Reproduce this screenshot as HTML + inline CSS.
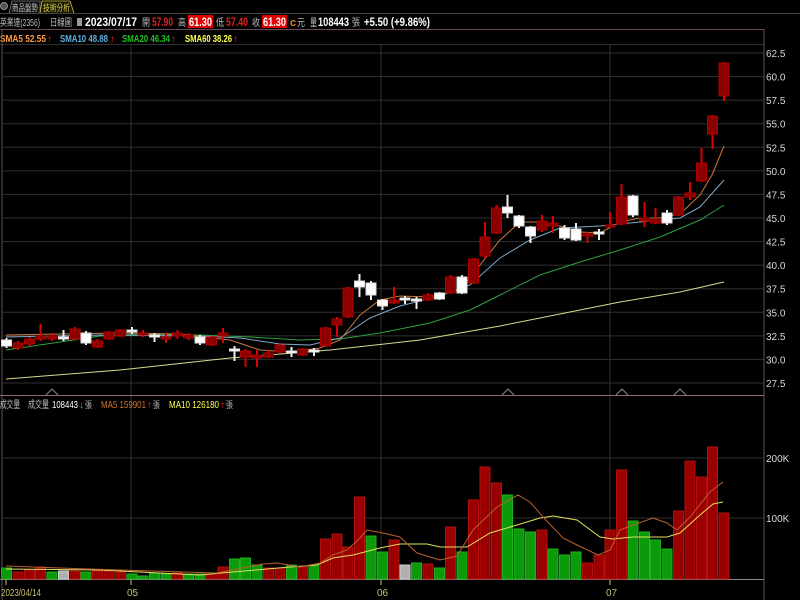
<!DOCTYPE html>
<html><head><meta charset="utf-8"><style>
html,body{margin:0;padding:0;background:#000;width:800px;height:600px;overflow:hidden}
svg{display:block}
text{font-family:"Liberation Sans","Noto Sans CJK TC",sans-serif}
.ax{fill:#d8d8d8;font-size:10px}
.g{stroke:#303030;stroke-width:1}
.rw{stroke:#e00000;stroke-width:2}
.rb{fill:#8c0000;stroke:#b00000;stroke-width:1}
.ww{stroke:#f0f0f0;stroke-width:2}
.wb{fill:#fff;stroke:#ddd;stroke-width:1}
.vr{fill:#9a0000;stroke:#b41010}
.vg{fill:#0a9a0a;stroke:#20b020}
.vx{fill:#b0b0b0;stroke:#ccc}
</style></head><body>
<svg width="800" height="600" viewBox="0 0 800 600" xmlns="http://www.w3.org/2000/svg">
<rect width="800" height="600" fill="#000"/>
<!-- tabs -->
<circle cx="4" cy="6" r="3.5" fill="#555" stroke="#aaa" stroke-width="0.8"/>
<path d="M9 13 L12 1 L40 1 L40 13" fill="#111" stroke="#777" stroke-width="0.8"/>
<text x="12" y="11" font-size="9" fill="#bbb" textLength="26" lengthAdjust="spacingAndGlyphs">商品盤勢</text>
<path d="M40 13 L42 1 L70 1 L74 13" fill="#1a1a00" stroke="#c8c040" stroke-width="0.8"/>
<text x="43" y="11" font-size="9" fill="#e0d060" textLength="27" lengthAdjust="spacingAndGlyphs">技術分析</text>
<line x1="0" y1="13.5" x2="800" y2="13.5" stroke="#444"/>
<!-- info row -->
<g font-size="10" lengthAdjust="spacingAndGlyphs">
<text x="0" y="26" fill="#bbb" textLength="40" lengthAdjust="spacingAndGlyphs">英業達(2356)</text>
<text x="50" y="26" fill="#bbb" textLength="22" lengthAdjust="spacingAndGlyphs">日線圖</text>
<rect x="77" y="18" width="5" height="8" fill="#999"/>
<text x="85" y="26" font-size="11.5" font-weight="bold" fill="#fff" textLength="52" lengthAdjust="spacingAndGlyphs">2023/07/17</text>
<text x="142" y="26" fill="#bbb" textLength="8" lengthAdjust="spacingAndGlyphs">開</text>
<text x="152" y="26" font-size="11.5" font-weight="bold" fill="#e02020" textLength="21" lengthAdjust="spacingAndGlyphs">57.90</text>
<text x="178" y="26" fill="#bbb" textLength="8" lengthAdjust="spacingAndGlyphs">高</text>
<rect x="188" y="15" width="25" height="13" fill="#e00000"/>
<text x="189" y="26" font-size="11.5" font-weight="bold" fill="#fff" textLength="23" lengthAdjust="spacingAndGlyphs">61.30</text>
<text x="216" y="26" fill="#bbb" textLength="8" lengthAdjust="spacingAndGlyphs">低</text>
<text x="226" y="26" font-size="11.5" font-weight="bold" fill="#e02020" textLength="22" lengthAdjust="spacingAndGlyphs">57.40</text>
<text x="252" y="26" fill="#bbb" textLength="8" lengthAdjust="spacingAndGlyphs">收</text>
<rect x="262" y="15" width="25" height="13" fill="#e00000"/>
<text x="263" y="26" font-size="11.5" font-weight="bold" fill="#fff" textLength="23" lengthAdjust="spacingAndGlyphs">61.30</text>
<text x="290" y="26" font-size="11" font-weight="bold" fill="#e08020">c</text>
<text x="297" y="26" fill="#bbb" textLength="8" lengthAdjust="spacingAndGlyphs">元</text>
<text x="310" y="26" fill="#bbb" textLength="7" lengthAdjust="spacingAndGlyphs">量</text>
<text x="318" y="26" font-size="11.5" font-weight="bold" fill="#fff" textLength="31" lengthAdjust="spacingAndGlyphs">108443</text>
<text x="352" y="26" fill="#bbb" textLength="8" lengthAdjust="spacingAndGlyphs">張</text>
<text x="364" y="26" font-size="11.5" font-weight="bold" fill="#fff" textLength="66" lengthAdjust="spacingAndGlyphs">+5.50 (+9.86%)</text>
</g>
<line x1="0" y1="29.5" x2="764" y2="29.5" stroke="#6a4a5a"/>
<!-- SMA legend -->
<text x="0" y="42" font-size="10.5" font-weight="bold" fill="#ff9a40" textLength="46" lengthAdjust="spacingAndGlyphs">SMA5 52.55</text>
<text x="47" y="42" font-size="10" fill="#ff2020">↑</text>
<text x="60" y="42" font-size="10.5" font-weight="bold" fill="#60b0e0" textLength="48" lengthAdjust="spacingAndGlyphs">SMA10 48.88</text>
<text x="110" y="42" font-size="10" fill="#ff2020">↑</text>
<text x="122" y="42" font-size="10.5" font-weight="bold" fill="#20c020" textLength="48" lengthAdjust="spacingAndGlyphs">SMA20 46.34</text>
<text x="171" y="42" font-size="10" fill="#ff2020">↑</text>
<text x="185" y="42" font-size="10.5" font-weight="bold" fill="#ffff50" textLength="47" lengthAdjust="spacingAndGlyphs">SMA60 38.26</text>
<text x="233" y="42" font-size="10" fill="#ff2020">↑</text>
<line x1="0" y1="44.5" x2="764" y2="44.5" stroke="#303030"/>
<!-- grids -->
<g class="g">
<line x1="3" y1="53" x2="764" y2="53"/><line x1="3" y1="76.6" x2="764" y2="76.6"/><line x1="3" y1="100.1" x2="764" y2="100.1"/><line x1="3" y1="123.7" x2="764" y2="123.7"/><line x1="3" y1="147.3" x2="764" y2="147.3"/><line x1="3" y1="170.9" x2="764" y2="170.9"/><line x1="3" y1="194.4" x2="764" y2="194.4"/><line x1="3" y1="218" x2="764" y2="218"/><line x1="3" y1="241.6" x2="764" y2="241.6"/><line x1="3" y1="265.1" x2="764" y2="265.1"/><line x1="3" y1="288.7" x2="764" y2="288.7"/><line x1="3" y1="312.3" x2="764" y2="312.3"/><line x1="3" y1="335.9" x2="764" y2="335.9"/><line x1="3" y1="359.4" x2="764" y2="359.4"/><line x1="3" y1="383" x2="764" y2="383"/>
<line x1="3" y1="458" x2="764" y2="458"/><line x1="3" y1="518" x2="764" y2="518"/>
<line x1="131" y1="45" x2="131" y2="579"/><line x1="381" y1="45" x2="381" y2="579"/><line x1="610" y1="45" x2="610" y2="579"/>
</g>
<!-- axes labels -->
<g class="ax">
<text x="766" y="57">62.5</text><text x="766" y="80.6">60.0</text><text x="766" y="104.1">57.5</text><text x="766" y="127.7">55.0</text><text x="766" y="151.3">52.5</text><text x="766" y="174.9">50.0</text><text x="766" y="198.4">47.5</text><text x="766" y="222">45.0</text><text x="766" y="245.6">42.5</text><text x="766" y="269.1">40.0</text><text x="766" y="292.7">37.5</text><text x="766" y="316.3">35.0</text><text x="766" y="339.9">32.5</text><text x="766" y="363.4">30.0</text><text x="766" y="387">27.5</text>
<text x="766" y="462">200K</text><text x="766" y="522">100K</text>
</g>
<line x1="764" y1="29" x2="764" y2="600" stroke="#6a4a5a"/>
<line x1="2" y1="29" x2="2" y2="600" stroke="#6a4a5a"/>
<line x1="0" y1="395.5" x2="764" y2="395.5" stroke="#8a6a7a"/>
<line x1="0" y1="579.5" x2="764" y2="579.5" stroke="#888"/>
<!-- markers -->
<g fill="none" stroke="#888" stroke-width="1">
<path d="M46 395 L52 389 L58 395"/><path d="M502 395 L508 389 L514 395"/><path d="M616 395 L622 389 L628 395"/><path d="M674 395 L680 389 L686 395"/>
</g>
<!-- MA lines price -->
<polyline fill="none" stroke="#d8d890" stroke-width="1" points="6,379 120,370 230,358 330,350 420,340 500,326 560,314 620,302 680,292 724,282"/>
<polyline fill="none" stroke="#30a040" stroke-width="1" points="6,350 60,342 100,336 140,334 200,335 250,337 300,340 340,339 380,333 430,323 470,310 500,295 540,275 580,262 620,250 660,237 700,220 724,205"/>
<polyline fill="none" stroke="#7ea8c8" stroke-width="1" points="6,337 100,335 200,336 240,338 280,344 310,345 340,338 370,318 400,306 440,296 470,285 500,258 530,240 560,228 600,226 640,222 680,218 700,207 724,180"/>
<polyline fill="none" stroke="#c87840" stroke-width="1" points="6,335 60,334 120,333 180,334 230,340 260,350 290,352 320,348 340,340 360,315 380,300 400,296 430,297 460,290 480,265 500,240 520,222 540,222 560,226 580,232 600,233 620,222 640,218 660,218 680,214 700,195 712,175 724,146"/>
<!-- candles -->
<g>
<line class="ww" x1="6.5" y1="338" x2="6.5" y2="348"/><rect class="wb" x="1.5" y="340" width="10" height="6"/>
<line class="rw" x1="18" y1="341" x2="18" y2="350"/><rect class="rb" x="13" y="343" width="10" height="5"/>
<line class="rw" x1="29.5" y1="337" x2="29.5" y2="346"/><rect class="rb" x="24.5" y="339" width="10" height="5"/>
<line class="rw" x1="40.5" y1="324" x2="40.5" y2="341"/><rect class="rb" x="35.5" y="336" width="10" height="3"/>
<line class="rw" x1="52" y1="333" x2="52" y2="341"/><rect class="rb" x="47" y="336" width="10" height="3"/>
<line class="ww" x1="63.5" y1="330" x2="63.5" y2="341"/><rect class="wb" x="58.5" y="337" width="10" height="2"/>
<line class="rw" x1="75" y1="327" x2="75" y2="340"/><rect class="rb" x="70" y="329" width="10" height="10"/>
<line class="ww" x1="86" y1="331" x2="86" y2="345"/><rect class="wb" x="81" y="333" width="10" height="10"/>
<line class="rw" x1="97.5" y1="339" x2="97.5" y2="348"/><rect class="rb" x="92.5" y="341" width="10" height="6"/>
<line class="rw" x1="109" y1="331" x2="109" y2="340"/><rect class="rb" x="104" y="332" width="10" height="7"/>
<line class="rw" x1="120.5" y1="329" x2="120.5" y2="337"/><rect class="rb" x="115.5" y="330" width="10" height="6"/>
<line class="ww" x1="132" y1="327" x2="132" y2="334"/><rect class="wb" x="127" y="330" width="10" height="2"/>
<line class="rw" x1="143" y1="330" x2="143" y2="337"/><rect class="rb" x="138" y="333" width="10" height="2"/>
<line class="ww" x1="154.5" y1="333" x2="154.5" y2="342"/><rect class="wb" x="149.5" y="335" width="10" height="2"/>
<line class="rw" x1="166" y1="333" x2="166" y2="343"/><rect class="rb" x="161" y="337" width="10" height="2"/>
<line class="rw" x1="177.5" y1="330" x2="177.5" y2="339"/><rect class="rb" x="172.5" y="333" width="10" height="3"/>
<line class="rw" x1="188.5" y1="333" x2="188.5" y2="340"/><rect class="rb" x="183.5" y="335" width="10" height="3"/>
<line class="ww" x1="200" y1="335" x2="200" y2="345"/><rect class="wb" x="195" y="337" width="10" height="6"/>
<line class="rw" x1="211.5" y1="336" x2="211.5" y2="346"/><rect class="rb" x="206.5" y="337" width="10" height="8"/>
<line class="rw" x1="223" y1="328" x2="223" y2="343"/><rect class="rb" x="218" y="333" width="10" height="3"/>
<line class="ww" x1="234.5" y1="346" x2="234.5" y2="361"/><rect class="wb" x="229.5" y="349" width="10" height="2"/>
<line class="rw" x1="245.5" y1="349" x2="245.5" y2="367"/><rect class="rb" x="240.5" y="351" width="10" height="6"/>
<line class="rw" x1="257" y1="350" x2="257" y2="367"/><rect class="rb" x="252" y="355" width="10" height="3"/>
<line class="rw" x1="268.5" y1="350" x2="268.5" y2="358"/><rect class="rb" x="263.5" y="353" width="10" height="4"/>
<line class="rw" x1="280" y1="343" x2="280" y2="353"/><rect class="rb" x="275" y="345" width="10" height="7"/>
<line class="ww" x1="291.5" y1="347" x2="291.5" y2="357"/><rect class="wb" x="286.5" y="351" width="10" height="2"/>
<line class="rw" x1="302.5" y1="348" x2="302.5" y2="356"/><rect class="rb" x="297.5" y="349" width="10" height="6"/>
<line class="ww" x1="314" y1="348" x2="314" y2="356"/><rect class="wb" x="309" y="350" width="10" height="2"/>
<line class="rw" x1="325.5" y1="327" x2="325.5" y2="347"/><rect class="rb" x="320.5" y="328" width="10" height="18"/>
<line class="rw" x1="337" y1="317" x2="337" y2="337"/><rect class="rb" x="332" y="319" width="10" height="6"/>
<line class="rw" x1="348" y1="287" x2="348" y2="318"/><rect class="rb" x="343" y="288" width="10" height="29"/>
<line class="ww" x1="359.5" y1="274" x2="359.5" y2="297"/><rect class="wb" x="354.5" y="281" width="10" height="6"/>
<line class="ww" x1="371" y1="281" x2="371" y2="300"/><rect class="wb" x="366" y="283" width="10" height="12"/>
<line class="ww" x1="382.5" y1="299" x2="382.5" y2="310"/><rect class="wb" x="377.5" y="300" width="10" height="6"/>
<line class="rw" x1="394" y1="287" x2="394" y2="304"/><rect class="rb" x="389" y="300" width="10" height="3"/>
<line class="ww" x1="405" y1="296" x2="405" y2="304"/><rect class="wb" x="400" y="298" width="10" height="2"/>
<line class="ww" x1="416.5" y1="297" x2="416.5" y2="309"/><rect class="wb" x="411.5" y="299" width="10" height="2"/>
<line class="rw" x1="428" y1="293" x2="428" y2="301"/><rect class="rb" x="423" y="295" width="10" height="5"/>
<line class="ww" x1="439.5" y1="292" x2="439.5" y2="300"/><rect class="wb" x="434.5" y="293" width="10" height="6"/>
<line class="rw" x1="450.5" y1="275" x2="450.5" y2="294"/><rect class="rb" x="445.5" y="277" width="10" height="16"/>
<line class="ww" x1="462" y1="275" x2="462" y2="294"/><rect class="wb" x="457" y="277" width="10" height="16"/>
<line class="rw" x1="473.5" y1="258" x2="473.5" y2="284"/><rect class="rb" x="468.5" y="259" width="10" height="24"/>
<line class="rw" x1="485" y1="222" x2="485" y2="259"/><rect class="rb" x="480" y="237" width="10" height="19"/>
<line class="rw" x1="496.5" y1="205" x2="496.5" y2="234"/><rect class="rb" x="491.5" y="208" width="10" height="25"/>
<line class="ww" x1="507.5" y1="195" x2="507.5" y2="218"/><rect class="wb" x="502.5" y="207" width="10" height="6"/>
<line class="ww" x1="519" y1="215" x2="519" y2="228"/><rect class="wb" x="514" y="216" width="10" height="10"/>
<line class="ww" x1="530.5" y1="226" x2="530.5" y2="243"/><rect class="wb" x="525.5" y="227" width="10" height="9"/>
<line class="rw" x1="542" y1="215" x2="542" y2="232"/><rect class="rb" x="537" y="221" width="10" height="9"/>
<line class="rw" x1="553" y1="216" x2="553" y2="233"/><rect class="rb" x="548" y="223" width="10" height="3"/>
<line class="ww" x1="564.5" y1="225" x2="564.5" y2="240"/><rect class="wb" x="559.5" y="228" width="10" height="10"/>
<line class="ww" x1="576" y1="223" x2="576" y2="241"/><rect class="wb" x="571" y="229" width="10" height="11"/>
<line class="rw" x1="587.5" y1="232" x2="587.5" y2="243"/><rect class="rb" x="582.5" y="234" width="10" height="2"/>
<line class="ww" x1="599" y1="229" x2="599" y2="240"/><rect class="wb" x="594" y="232" width="10" height="2"/>
<line class="rw" x1="610" y1="212" x2="610" y2="228"/><rect class="rb" x="605" y="225" width="10" height="2"/>
<line class="rw" x1="621.5" y1="184" x2="621.5" y2="225"/><rect class="rb" x="616.5" y="197" width="10" height="27"/>
<line class="ww" x1="633" y1="195" x2="633" y2="217"/><rect class="wb" x="628" y="196" width="10" height="19"/>
<line class="rw" x1="644.5" y1="202" x2="644.5" y2="227"/><rect class="rb" x="639.5" y="218" width="10" height="3"/>
<line class="rw" x1="655.5" y1="208" x2="655.5" y2="224"/><rect class="rb" x="650.5" y="220" width="10" height="3"/>
<line class="ww" x1="667" y1="210" x2="667" y2="225"/><rect class="wb" x="662" y="213" width="10" height="10"/>
<line class="rw" x1="678.5" y1="196" x2="678.5" y2="216"/><rect class="rb" x="673.5" y="197" width="10" height="18"/>
<line class="rw" x1="690" y1="182" x2="690" y2="200"/><rect class="rb" x="685" y="193" width="10" height="4"/>
<line class="rw" x1="701.5" y1="148" x2="701.5" y2="182"/><rect class="rb" x="696.5" y="163" width="10" height="18"/>
<line class="rw" x1="712.5" y1="115" x2="712.5" y2="149"/><rect class="rb" x="707.5" y="116" width="10" height="18"/>
<line class="rw" x1="724" y1="62" x2="724" y2="101"/><rect class="rb" x="719" y="63" width="10" height="33"/>
</g>
<!-- volume legend -->
<text x="0" y="408" font-size="10" fill="#bbb" textLength="20" lengthAdjust="spacingAndGlyphs">成交量</text>
<text x="28" y="408" font-size="10" fill="#bbb" textLength="21" lengthAdjust="spacingAndGlyphs">成交量</text>
<text x="52" y="408" font-size="10.5" fill="#fff" textLength="26" lengthAdjust="spacingAndGlyphs">108443</text>
<text x="79" y="408" font-size="10" fill="#20d020">↓</text>
<text x="85" y="408" font-size="9" fill="#bbb" textLength="7" lengthAdjust="spacingAndGlyphs">張</text>
<text x="101" y="408" font-size="10.5" fill="#d07030" textLength="45" lengthAdjust="spacingAndGlyphs">MA5 159901</text>
<text x="147" y="408" font-size="10" fill="#ff2020">↑</text>
<text x="153" y="408" font-size="9" fill="#bbb" textLength="7" lengthAdjust="spacingAndGlyphs">張</text>
<text x="169" y="408" font-size="10.5" fill="#ffff50" textLength="50" lengthAdjust="spacingAndGlyphs">MA10 126180</text>
<text x="220" y="408" font-size="10" fill="#ff2020">↑</text>
<text x="226" y="408" font-size="9" fill="#bbb" textLength="7" lengthAdjust="spacingAndGlyphs">張</text>
<!-- volume bars -->
<g>
<rect class="vg" x="1.5" y="568" width="10" height="11"/>
<rect class="vr" x="13" y="572" width="10" height="7"/>
<rect class="vr" x="24.5" y="570" width="10" height="9"/>
<rect class="vr" x="35.5" y="567" width="10" height="12"/>
<rect class="vg" x="47" y="572" width="10" height="7"/>
<rect class="vx" x="58.5" y="571" width="10" height="8"/>
<rect class="vr" x="70" y="571" width="10" height="8"/>
<rect class="vg" x="81" y="572" width="10" height="7"/>
<rect class="vr" x="92.5" y="571" width="10" height="8"/>
<rect class="vr" x="104" y="571" width="10" height="8"/>
<rect class="vr" x="115.5" y="572" width="10" height="7"/>
<rect class="vg" x="127" y="574" width="10" height="5"/>
<rect class="vg" x="138" y="576" width="10" height="3"/>
<rect class="vg" x="149.5" y="573" width="10" height="6"/>
<rect class="vg" x="161" y="574" width="10" height="5"/>
<rect class="vr" x="172.5" y="573" width="10" height="6"/>
<rect class="vg" x="183.5" y="574" width="10" height="5"/>
<rect class="vg" x="195" y="574" width="10" height="5"/>
<rect class="vr" x="206.5" y="574" width="10" height="5"/>
<rect class="vr" x="218" y="567" width="10" height="12"/>
<rect class="vg" x="229.5" y="559" width="10" height="20"/>
<rect class="vg" x="240.5" y="558" width="10" height="21"/>
<rect class="vg" x="252" y="565" width="10" height="14"/>
<rect class="vr" x="263.5" y="568" width="10" height="11"/>
<rect class="vr" x="275" y="568" width="10" height="11"/>
<rect class="vg" x="286.5" y="565" width="10" height="14"/>
<rect class="vr" x="297.5" y="567" width="10" height="12"/>
<rect class="vg" x="309" y="565" width="10" height="14"/>
<rect class="vr" x="320.5" y="539" width="10" height="40"/>
<rect class="vr" x="332" y="534" width="10" height="45"/>
<rect class="vr" x="343" y="547" width="10" height="32"/>
<rect class="vr" x="354.5" y="497" width="10" height="82"/>
<rect class="vg" x="366" y="536" width="10" height="43"/>
<rect class="vg" x="377.5" y="552" width="10" height="27"/>
<rect class="vr" x="389" y="540" width="10" height="39"/>
<rect class="vx" x="400" y="565" width="10" height="14"/>
<rect class="vg" x="411.5" y="563" width="10" height="16"/>
<rect class="vr" x="423" y="564" width="10" height="15"/>
<rect class="vg" x="434.5" y="568" width="10" height="11"/>
<rect class="vr" x="445.5" y="527" width="10" height="52"/>
<rect class="vg" x="457" y="552" width="10" height="27"/>
<rect class="vr" x="468.5" y="500" width="10" height="79"/>
<rect class="vr" x="480" y="467" width="10" height="112"/>
<rect class="vr" x="491.5" y="483" width="10" height="96"/>
<rect class="vg" x="502.5" y="495" width="10" height="84"/>
<rect class="vg" x="514" y="529" width="10" height="50"/>
<rect class="vg" x="525.5" y="532" width="10" height="47"/>
<rect class="vr" x="537" y="530" width="10" height="49"/>
<rect class="vg" x="548" y="549" width="10" height="30"/>
<rect class="vg" x="559.5" y="555" width="10" height="24"/>
<rect class="vg" x="571" y="552" width="10" height="27"/>
<rect class="vr" x="582.5" y="563" width="10" height="16"/>
<rect class="vr" x="594" y="555" width="10" height="24"/>
<rect class="vr" x="605" y="530" width="10" height="49"/>
<rect class="vr" x="616.5" y="470" width="10" height="109"/>
<rect class="vg" x="628" y="521" width="10" height="58"/>
<rect class="vg" x="639.5" y="532" width="10" height="47"/>
<rect class="vg" x="650.5" y="540" width="10" height="39"/>
<rect class="vg" x="662" y="549" width="10" height="30"/>
<rect class="vr" x="673.5" y="511" width="10" height="68"/>
<rect class="vr" x="685" y="461" width="10" height="118"/>
<rect class="vr" x="696.5" y="477" width="10" height="102"/>
<rect class="vr" x="707.5" y="447" width="10" height="132"/>
<rect class="vr" x="719" y="513" width="10" height="66"/>
</g>
<!-- volume MAs -->
<polyline fill="none" stroke="#e0e060" stroke-width="1" points="6,569 100,570 200,575 233,572 290,567 317,565 333,558 353,555 380,548 400,544 427,544 440,547 467,547 490,533 517,525 540,518 553,516 577,520 600,537 613,539 633,537 667,537 680,533 700,515 713,504 723,502"/>
<polyline fill="none" stroke="#b86030" stroke-width="1" points="6,566 60,568 120,570 217,573 247,567 263,564 277,563 300,567 320,563 333,555 347,550 360,538 367,530 383,533 400,537 417,553 440,560 457,556 473,530 497,507 518,495 530,502 543,517 563,538 577,545 598,555 610,550 620,530 633,525 653,518 667,523 677,530 690,517 710,492 723,482"/>
<!-- date axis -->
<g stroke="#c8c070"><line x1="6" y1="580" x2="6" y2="585"/><line x1="131" y1="580" x2="131" y2="585"/><line x1="381" y1="580" x2="381" y2="585"/><line x1="610" y1="580" x2="610" y2="585"/></g>
<g font-size="10" fill="#c8c070">
<text x="1" y="596" textLength="40" lengthAdjust="spacingAndGlyphs">2023/04/14</text><text x="127" y="596">05</text><text x="377" y="596">06</text><text x="606" y="596">07</text>
</g>
</svg>
</body></html>
